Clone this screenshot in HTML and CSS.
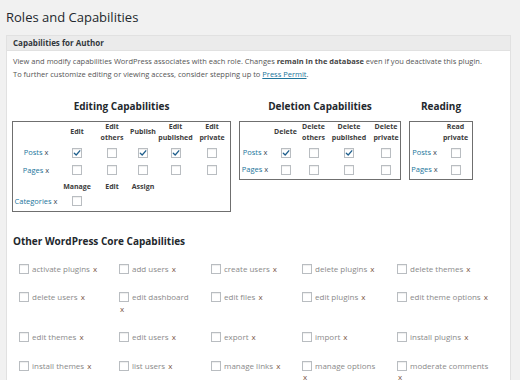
FILE: index.html
```html
<!DOCTYPE html>
<html>
<head>
<meta charset="utf-8">
<title>Roles and Capabilities</title>
<link rel="stylesheet" href="styles.css">
</head>
<body>
<div class="wrap">
  <h1 class="page-title">Roles and Capabilities</h1>
  <div class="panel">
    <div class="panel-head">Capabilities for Author</div>
    <div class="panel-body">
      <p class="desc">View and modify capabilities WordPress associates with each role. Changes <strong>remain in the database</strong> even if you deactivate this plugin.<br>To further customize editing or viewing access, consider stepping up to <a href="#">Press Permit</a>.</p>

      <div class="cap-groups">
        <div class="group">
          <h3 class="group-title">Editing Capabilities</h3>
          <div class="box">
            <table class="cap-table">
              <colgroup><col class="w46"><col class="w36"><col class="w34"><col class="w28"><col class="w37"><col class="w36"></colgroup>
              <tr class="head-row"><th></th><th>Edit</th><th>Edit<br>others</th><th>Publish</th><th>Edit<br>published</th><th>Edit<br>private</th></tr>
              <tr><td class="lab"><a href="#">Posts</a> <span class="x">x</span></td><td><span class="cb on"><svg viewBox="0 0 8 8"><path d="M1.3 4.2 L3.2 6 L6.8 1.8"/></svg></span></td><td><span class="cb"></span></td><td><span class="cb on"><svg viewBox="0 0 8 8"><path d="M1.3 4.2 L3.2 6 L6.8 1.8"/></svg></span></td><td><span class="cb on"><svg viewBox="0 0 8 8"><path d="M1.3 4.2 L3.2 6 L6.8 1.8"/></svg></span></td><td><span class="cb"></span></td></tr>
              <tr><td class="lab"><a href="#">Pages</a> <span class="x">x</span></td><td><span class="cb"></span></td><td><span class="cb"></span></td><td><span class="cb"></span></td><td><span class="cb"></span></td><td><span class="cb"></span></td></tr>
              <tr class="head-row short"><th></th><th>Manage</th><th>Edit</th><th>Assign</th><th></th><th></th></tr>
              <tr class="last"><td class="lab"><a href="#">Categories</a> <span class="x">x</span></td><td><span class="cb"></span></td><td></td><td></td><td></td><td></td></tr>
            </table>
          </div>
        </div>

        <div class="group">
          <h3 class="group-title">Deletion Capabilities</h3>
          <div class="box">
            <table class="cap-table">
              <colgroup><col class="w30"><col class="w31"><col class="w25"><col class="w46"><col class="w28"></colgroup>
              <tr class="head-row"><th></th><th>Delete</th><th>Delete<br>others</th><th>Delete<br>published</th><th>Delete<br>private</th></tr>
              <tr><td class="lab"><a href="#">Posts</a> <span class="x">x</span></td><td><span class="cb on"><svg viewBox="0 0 8 8"><path d="M1.3 4.2 L3.2 6 L6.8 1.8"/></svg></span></td><td><span class="cb"></span></td><td><span class="cb on"><svg viewBox="0 0 8 8"><path d="M1.3 4.2 L3.2 6 L6.8 1.8"/></svg></span></td><td><span class="cb"></span></td></tr>
              <tr class="last"><td class="lab"><a href="#">Pages</a> <span class="x">x</span></td><td><span class="cb"></span></td><td><span class="cb"></span></td><td><span class="cb"></span></td><td><span class="cb"></span></td></tr>
            </table>
          </div>
        </div>

        <div class="group">
          <h3 class="group-title">Reading</h3>
          <div class="box">
            <table class="cap-table">
              <colgroup><col class="w29"><col class="w33"></colgroup>
              <tr class="head-row"><th></th><th>Read<br>private</th></tr>
              <tr><td class="lab"><a href="#">Posts</a> <span class="x">x</span></td><td><span class="cb"></span></td></tr>
              <tr class="last"><td class="lab"><a href="#">Pages</a> <span class="x">x</span></td><td><span class="cb"></span></td></tr>
            </table>
          </div>
        </div>
      </div>

      <h3 class="other-title">Other WordPress Core Capabilities</h3>
      <div class="core-grid">
        <div class="core-item"><span class="cb"></span>activate plugins <span class="x">x</span></div>
        <div class="core-item"><span class="cb"></span>add users <span class="x">x</span></div>
        <div class="core-item"><span class="cb"></span>create users <span class="x">x</span></div>
        <div class="core-item"><span class="cb"></span>delete plugins <span class="x">x</span></div>
        <div class="core-item"><span class="cb"></span>delete themes <span class="x">x</span></div>

        <div class="core-item"><span class="cb"></span>delete users <span class="x">x</span></div>
        <div class="core-item"><span class="cb"></span>edit dashboard <span class="x">x</span></div>
        <div class="core-item"><span class="cb"></span>edit files <span class="x">x</span></div>
        <div class="core-item"><span class="cb"></span>edit plugins <span class="x">x</span></div>
        <div class="core-item"><span class="cb"></span>edit theme options <span class="x">x</span></div>

        <div class="core-item"><span class="cb"></span>edit themes <span class="x">x</span></div>
        <div class="core-item"><span class="cb"></span>edit users <span class="x">x</span></div>
        <div class="core-item"><span class="cb"></span>export <span class="x">x</span></div>
        <div class="core-item"><span class="cb"></span>import <span class="x">x</span></div>
        <div class="core-item"><span class="cb"></span>install plugins <span class="x">x</span></div>

        <div class="core-item"><span class="cb"></span>install themes <span class="x">x</span></div>
        <div class="core-item"><span class="cb"></span>list users <span class="x">x</span></div>
        <div class="core-item"><span class="cb"></span>manage links <span class="x">x</span></div>
        <div class="core-item"><span class="cb"></span>manage options <span class="x">x</span></div>
        <div class="core-item"><span class="cb"></span>moderate comments <span class="x">x</span></div>
      </div>
    </div>
  </div>
</div>
</body>
</html>
```

FILE: styles.css
```css
* { box-sizing: border-box; }
html, body { margin: 0; padding: 0; }
body {
  background: #f1f1f1;
  font-family: "Open Sans", "Noto Sans", sans-serif;
  color: #444;
  width: 520px;
  height: 380px;
  overflow: hidden;
}
.wrap { padding: 0 9px 0 6px; }
.page-title {
  margin: 0;
  padding: 8px 0 0 0;
  height: 35px;
  font-size: 13px;
  line-height: 18px;
  font-weight: 400;
  color: #23282d;
}
.panel {
  background: #fff;
  border: 1px solid #e1e1e1;
  min-height: 360px;
}
.panel-head {
  height: 15px;
  background: #ebebeb;
  border-bottom: 1px solid #e1e1e1;
  padding-left: 6px;
  font-size: 8px;
  font-weight: 700;
  line-height: 14px;
  color: #32373c;
}
.panel-body { padding: 4px 6px 0 6px; }
.desc {
  margin: 0;
  font-size: 7.5px;
  line-height: 13.3px;
  color: #555;
}
.desc strong { color: #444; }
.desc a { color: #21759b; }

.cap-groups {
  display: flex;
  align-items: flex-start;
  gap: 8px;
  margin: 17px 0 0 -1px;
}
.group-title {
  margin: 0 0 8px 0;
  font-size: 10px;
  line-height: 14px;
  font-weight: 700;
  text-align: center;
  color: #23282d;
}
.box {
  border: 1px solid #6f6f6f;
  padding-bottom: 2px;
}
.cap-table {
  border-collapse: collapse;
  border-spacing: 0;
  table-layout: fixed;
  font-size: 7.5px;
  line-height: 10px;
}
col.w25 { width: 25px; }
col.w28 { width: 28px; }
col.w29 { width: 29px; }
col.w30 { width: 30px; }
col.w31 { width: 31px; }
col.w33 { width: 33px; }
col.w34 { width: 34px; }
col.w36 { width: 36px; }
col.w37 { width: 37px; }
col.w46 { width: 46px; }
.cap-table th {
  padding: 0;
  height: 22px;
  font-size: 7px;
  line-height: 10.5px;
  font-weight: 700;
  color: #3c3c3c;
  text-align: center;
  vertical-align: middle;
}
.cap-table .short th { height: 14px; vertical-align: bottom; }
.cap-table td {
  padding: 0;
  height: 17.5px;
  text-align: center;
  vertical-align: middle;
}
.cap-table tr.last td { height: 16px; }
.cap-table .lab { white-space: nowrap; }
.cap-table .lab a { color: #21759b; text-decoration: none; }
.cap-table .lab .x { color: #3d4b58; }

.cb {
  display: inline-block;
  width: 10px;
  height: 10px;
  border: 1px solid #b9bdc1;
  background: #fff;
  box-shadow: inset 0 1px 1px rgba(0,0,0,0.07);
  vertical-align: middle;
}
.cb svg { display: block; width: 8px; height: 8px; }
.cb svg path {
  fill: none;
  stroke: #1f5f8d;
  stroke-width: 1.3;
  stroke-linecap: round;
  stroke-linejoin: round;
}

.other-title {
  margin: 22px 0 15px 0;
  font-size: 10px;
  line-height: 14px;
  font-weight: 700;
  color: #23282d;
}
.core-grid {
  display: grid;
  grid-template-columns: 100px 92px 91px 95px 1fr;
  row-gap: 17px;
  padding-left: 6px;
}
.core-item {
  padding-right: 18px;
  font-size: 8px;
  line-height: 11.5px;
  color: #8a8a8a;
}
.core-item:nth-child(5n) { padding-right: 10px; }
.core-item .cb { margin-right: 3px; vertical-align: -2px; }
.core-item .x { color: #7a5646; margin-left: 1px; }
```
